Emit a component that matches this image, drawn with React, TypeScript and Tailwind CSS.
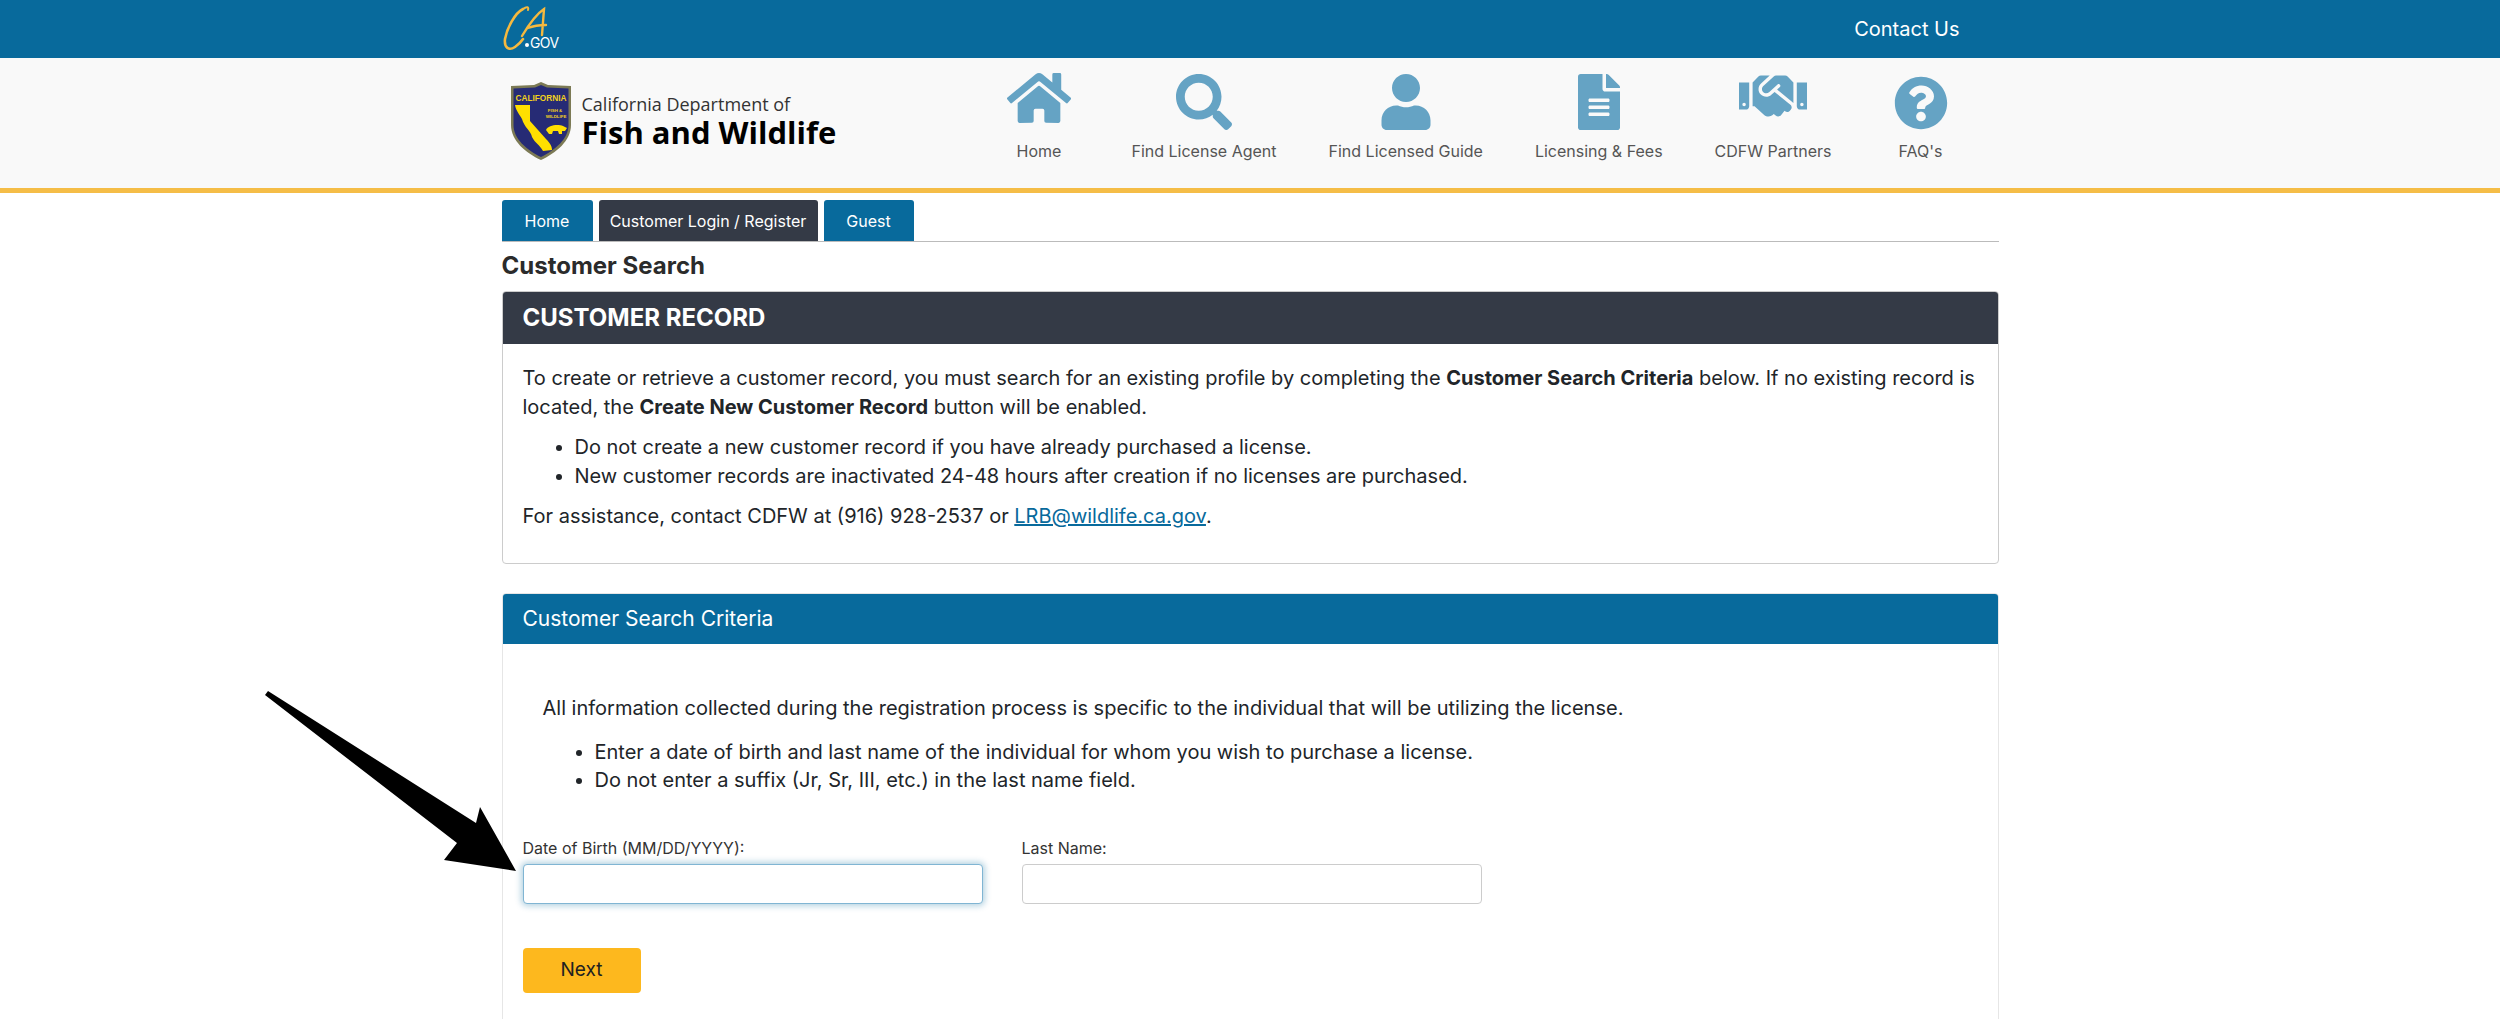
import { FaHome, FaSearch, FaUser, FaFileAlt, FaHandshake, FaQuestionCircle } from "react-icons/fa";

const nav = [
  { label: "Home", icon: FaHome, size: "text-[64px]", box: "w-[81px]" },
  { label: "Find License Agent", icon: FaSearch, size: "text-[56px]", box: "" },
  { label: "Find Licensed Guide", icon: FaUser, size: "text-[56px]", box: "" },
  { label: "Licensing & Fees", icon: FaFileAlt, size: "text-[56px]", box: "" },
  { label: "CDFW Partners", icon: FaHandshake, size: "text-[68px]", box: "" },
  { label: "FAQ's", icon: FaQuestionCircle, size: "text-[54px]", box: "w-[74px]" },
];

function CaGov() {
  return (
    <svg width="60" height="50" viewBox="0 0 60 50" className="block">
      <path d="M21 5 C13 9 5 24 3 35 C2 44 7 47 13 43 C16 41 19 38 21 35" fill="none" stroke="#f5b93f" strokeWidth="2.6" strokeLinecap="round" />
      <path d="M21 5 C25 2 27 3 26 6" fill="none" stroke="#f5b93f" strokeWidth="2" strokeLinecap="round" />
      <path d="M20 32 C26 22 33 11 42 5 L40 31 M26 24 C31 22 38 21 44 21" fill="none" stroke="#f5b93f" strokeWidth="2.4" strokeLinecap="round" />
      <circle cx="25" cy="41" r="2" fill="#fff" />
      <text x="28" y="44" fill="#fff" fontSize="14" fontFamily="Inter, sans-serif" letterSpacing="-0.6">GOV</text>
    </svg>
  );
}

function Shield() {
  return (
    <svg width="62" height="80" viewBox="0 0 62 80" className="block">
      <path d="M31 1 L38 4 L61 5 L61 44 C61 60 46 72 31 79 C16 72 1 60 1 44 L1 5 L24 4 Z" fill="#7c7a55" />
      <path d="M31 4 L37 6.5 L58.5 7.5 L58.5 44 C58.5 58 45 69 31 76 C17 69 3.5 58 3.5 44 L3.5 7.5 L25 6.5 Z" fill="#262b75" />
      <text x="31" y="20" textAnchor="middle" fill="#f2d21b" fontSize="9.5" fontWeight="700" fontFamily="Liberation Sans, sans-serif" textLength="51" lengthAdjust="spacingAndGlyphs">CALIFORNIA</text>
      <text x="45" y="31" textAnchor="middle" fill="#f2d21b" fontSize="4.4" fontWeight="700" fontFamily="Liberation Sans, sans-serif">FISH &amp;</text>
      <text x="46" y="37" textAnchor="middle" fill="#f2d21b" fontSize="4.4" fontWeight="700" fontFamily="Liberation Sans, sans-serif">WILDLIFE</text>
      <path d="M5 24 L20 24 L20 40 L36 58 C41 63 42 66 42 69 L33 70 C30 64 25 62 22 56 C21 50 14 46 12 38 C10 34 6 30 5 24 Z" fill="#ffdf00" />
      <path d="M36 49 C38 44 48 43 53 45 L57 47 L55 50 L52 50 L52 53 L49 53 L48 50 L43 50 L42 53 L39 53 Z" fill="#ffdf00" />
    </svg>
  );
}

export default function App() {
  return (
    <div className="relative h-[1019px] overflow-hidden bg-white font-['Inter',sans-serif] text-[#212529]">
      <div className="h-[58px] bg-[#086a9c]">
        <div className="mx-auto flex h-full w-[1497px] items-center justify-between pr-[39px] pl-0">
          <CaGov />
          <a className="text-[20px] text-white">Contact Us</a>
        </div>
      </div>
      <header className="h-[135px] border-b-[5px] border-[#f5bd47] bg-[#f9f9f9]">
        <div className="mx-auto flex h-full w-[1497px] items-start justify-between pr-[41px]">
          <div className="mt-[23px] ml-[8px] flex items-center gap-[10px]">
            <Shield />
            <div>
              <div className="text-[18px] leading-[22px] text-[#333] font-['Open_Sans',sans-serif]">California Department of</div>
              <div className="text-[31px] leading-[34px] font-bold text-black font-['Open_Sans',sans-serif]">Fish and Wildlife</div>
            </div>
          </div>
          <nav className="flex gap-[52px]">
            {nav.map((n) => {
              const Icon = n.icon;
              return (
                <div key={n.label} className={`flex flex-col items-center ${n.box}`}>
                  <div className={`flex h-[72px] items-end text-[#65a3c4] ${n.size}`}>
                    <Icon />
                  </div>
                  <span className="mt-[11px] text-[16px] leading-[20px] whitespace-nowrap text-[#555]">{n.label}</span>
                </div>
              );
            })}
          </nav>
        </div>
      </header>
      <main className="mx-auto w-[1497px]">
        <div className="mt-[7px] flex gap-[6px] border-b border-[#bbb]">
          <div className="flex h-[41px] w-[91px] items-center justify-center rounded-t-[3px] bg-[#086a9c] text-[16px] text-white">Home</div>
          <div className="flex h-[41px] w-[219px] items-center justify-center rounded-t-[3px] bg-[#343a46] text-[16px] text-white">Customer Login / Register</div>
          <div className="flex h-[41px] w-[90px] items-center justify-center rounded-t-[3px] bg-[#086a9c] text-[16px] text-white">Guest</div>
        </div>
        <h1 className="mt-[8px] text-[24px] leading-[32px] font-bold text-[#2b2b2b]">Customer Search</h1>
        <section className="mt-[9px] h-[273px] rounded-[4px] border border-[#ccc]">
          <div className="flex h-[52px] items-center rounded-t-[3px] bg-[#343a46] px-[20px] text-[24px] font-bold text-white">CUSTOMER RECORD</div>
          <div className="px-[20px] pt-[20px] text-[20px] leading-[29px]">
            <p>To create or retrieve a customer record, you must search for an existing profile by completing the <b>Customer Search Criteria</b> below. If no existing record is located, the <b>Create New Customer Record</b> button will be enabled.</p>
            <ul className="mt-[11px] list-disc pl-[52px]">
              <li>Do not create a new customer record if you have already purchased a license.</li>
              <li>New customer records are inactivated 24-48 hours after creation if no licenses are purchased.</li>
            </ul>
            <p className="mt-[11px]">For assistance, contact CDFW at (916) 928-2537 or <a className="text-[#086a9c] underline">LRB@wildlife.ca.gov</a>.</p>
          </div>
        </section>
        <section className="mt-[29px] h-[500px] rounded-[4px] border border-[#e6e6e6]">
          <div className="flex h-[50px] items-center rounded-t-[3px] bg-[#086a9c] px-[20px] text-[21px] text-white">Customer Search Criteria</div>
          <div className="px-[20px] pt-[50px]">
            <div className="pl-[20px] text-[20px] leading-[28px]">
              <p>All information collected during the registration process is specific to the individual that will be utilizing the license.</p>
              <ul className="mt-[16px] list-disc pl-[52px]">
                <li>Enter a date of birth and last name of the individual for whom you wish to purchase a license.</li>
                <li>Do not enter a suffix (Jr, Sr, III, etc.) in the last name field.</li>
              </ul>
            </div>
            <div className="mt-[44px] flex gap-[39px]">
              <label className="block w-[460px]">
                <span className="block text-[16px] leading-[20px] text-[#333]">Date of Birth (MM/DD/YYYY):</span>
                <input className="mt-[6px] block h-[40px] w-full rounded-[4px] border border-[#80b5d3] bg-white shadow-[0_0_6px_2px_rgba(8,106,156,0.3)] outline-none" />
              </label>
              <label className="block w-[460px]">
                <span className="block text-[16px] leading-[20px] text-[#333]">Last Name:</span>
                <input className="mt-[6px] block h-[40px] w-full rounded-[4px] border border-[#ccc] bg-white outline-none" />
              </label>
            </div>
            <button className="mt-[44px] flex h-[45px] w-[118px] items-center justify-center rounded-[4px] bg-[#fdb81e] text-[19px] text-[#212121]">Next</button>
          </div>
        </section>
      </main>
      <svg className="pointer-events-none absolute top-0 left-0" width="2500" height="1019" viewBox="0 0 2500 1019">
        <polygon points="268,691 476,823 480,807 516,871 444,860 457,843 265,695" fill="#000" />
      </svg>
    </div>
  );
}
